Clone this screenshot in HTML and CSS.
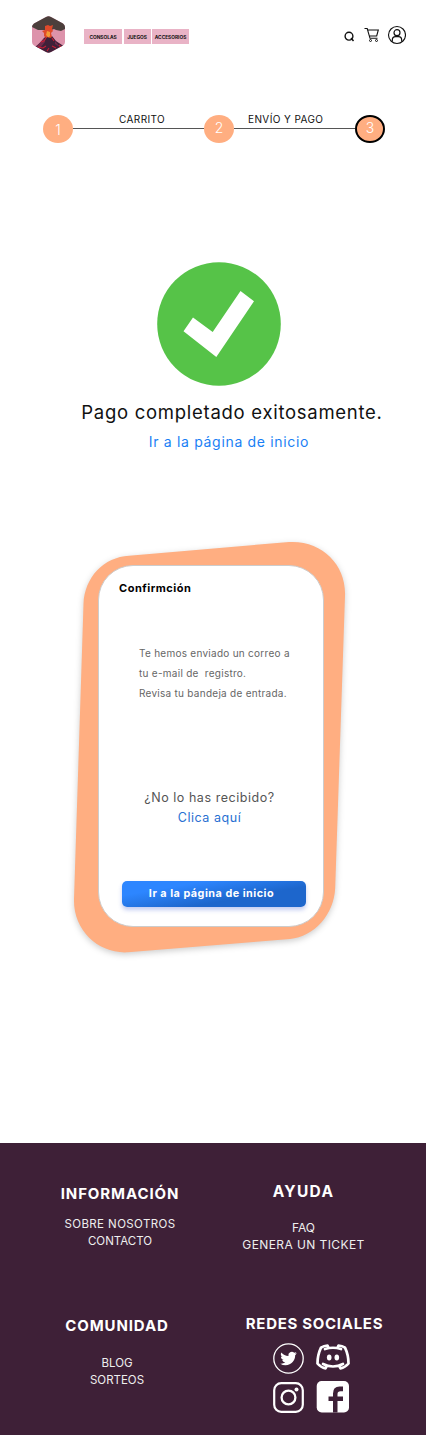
FILE: index.html
```html
<!DOCTYPE html>
<html lang="es">
<head>
<meta charset="utf-8">
<title>Pago completado</title>
<link rel="stylesheet" href="styles.css">
</head>
<body>
<header class="header">
  <svg class="logo" width="33" height="37" viewBox="0 0 33 37">
    <defs><clipPath id="hex"><path d="M14 1Q16.500 -.5 19 1L31 7.500Q33 9 33 11V26Q33 28 31 29.500L19 36Q16.500 37.500 14 36L2 29.500Q0 28 0 26V11Q0 9 2 7.500Z"/></clipPath></defs>
    <g clip-path="url(#hex)">
      <path fill="#dd93ab" d="M0 0h33v37H0z"/>
      <path fill="#4b3f3c" d="M0 0h33v13l-4 2-5-1-2-1-5 2-5-1-6 0-6-3z"/>
      <path fill="#402039" d="M13 21l7-1 4 5 9 6v6H3v-6l6-5z"/>
      <path fill="#74294b" d="M12 22l1 4-5 6-4-1zM23 25l5 6-5-3z"/>
      <path fill="#df4a2b" d="M13 10l3-1 2 1 3-1-1 4 1 2-2 2 1 4-2 1-2-1-2 1-2-2v-3l-2-2 3-1z"/>
      <path fill="#f39a35" d="M15 15l3 1v4l-1.500 1.500L14 19z"/>
      <path fill="none" stroke="#c91e35" stroke-width="1.100" d="M14 22l-2 3-3 1M20 22l2 3M14 30l-3 2-5-1M20 30l4 2M27 29l2 2M15 35l2-3"/>
    </g>
  </svg>
  <nav class="nav">
    <a class="nav-link nav-consoles">CONSOLAS</a>
    <a class="nav-link nav-games">JUEGOS</a>
    <a class="nav-link nav-accessories">ACCESORIOS</a>
  </nav>
  <svg class="tools" width="66" height="22" viewBox="0 0 66 22" fill="none" stroke="#111">
    <circle cx="9" cy="12.200" r="3.900" stroke-width="1.400"/><path stroke-width="1.500" d="M11 14l2.500 3"/>
    <path stroke-width="1.100" d="M24.500 4.500h2.700l2.800 9.800h7.500M27.800 6h10.500l-1.600 6H29.500"/>
    <circle cx="30.500" cy="16.500" r="1"/><circle cx="36.500" cy="16.500" r="1"/>
    <circle cx="57" cy="11" r="8.500" stroke-width="1.100"/><circle cx="57" cy="8.700" r="3" stroke-width="1.200"/>
    <path stroke-width="1.200" d="M52.300 17.500v-1.200q0-3.600 3.200-3.600h3q3.200 0 3.200 3.600v1.200"/>
  </svg>
</header>

<section class="steps">
  <span class="step step-first">1</span>
  <span class="step-line step-line-cart"><span class="step-label">CARRITO</span></span>
  <span class="step">2</span>
  <span class="step-line"><span class="step-label step-label-pay">ENVÍO Y PAGO</span></span>
  <span class="step step-current">3</span>
</section>

<main>
  <section class="result">
    <svg class="check" width="124" height="124" viewBox="0 0 124 124">
      <circle cx="62" cy="62" r="61.800" fill="#56c348"/>
      <path fill="#fff" d="M26.500 69.300L36 55.600l19.700 14.300L83.500 29 97 39.300 59.300 95z"/>
    </svg>
    <h1 class="title">Pago completado exitosamente.</h1>
    <a class="home-link">Ir a la página de inicio</a>
  </section>

  <section class="confirm">
    <svg class="confirm-shape" width="290" height="430" viewBox="65 532 290 430">
      <path fill="#ffae81" d="M83.500 604C84.500 577 104 557 129 555.700L289 542C322 540 346.500 565 345 596L335.200 888C334 915 314 936.500 290 939L128 952.300C98 954 73 930 74 899Z"/>
    </svg>
    <div class="card">
      <h2 class="card-title">Confirmción</h2>
      <p class="message">Te hemos enviado un correo a<br>tu e-mail de&nbsp; registro.<br>Revisa tu bandeja de entrada.</p>
      <div class="resend">
        <span>¿No lo has recibido?</span>
        <a class="resend-link">Clica aquí</a>
      </div>
      <button class="button">Ir a la página de inicio</button>
    </div>
  </section>
</main>

<footer class="footer">
  <section class="col col-info">
    <h3 class="heading">INFORMACIÓN</h3>
    <a class="wide">SOBRE NOSOTROS</a>
    <a>CONTACTO</a>
  </section>
  <section class="col col-help">
    <h3 class="heading">AYUDA</h3>
    <a>FAQ</a>
    <a class="wide">GENERA UN TICKET</a>
  </section>
  <section class="col col-community">
    <h3 class="heading">COMUNIDAD</h3>
    <a>BLOG</a>
    <a>SORTEOS</a>
  </section>
  <section class="col col-social">
    <h3 class="heading">REDES SOCIALES</h3>
    <div class="socials">
      <svg width="31" height="31" viewBox="0 0 31 31">
        <circle cx="15.500" cy="15.500" r="14.700" fill="none" stroke="#fff" stroke-width="1.300"/>
        <path fill="#fff" transform="translate(7.300 7.200) scale(.69)" d="M23.950 4.570a10 10 0 0 1-2.820.77 4.960 4.960 0 0 0 2.160-2.720c-.95.550-2 .950-3.120 1.180a4.920 4.920 0 0 0-8.380 4.480C7.690 8.090 4.070 6.130 1.640 3.160a4.920 4.920 0 0 0 1.520 6.570 4.900 4.900 0 0 1-2.230-.61v.06a4.920 4.920 0 0 0 3.950 4.830 4.900 4.900 0 0 1-2.210.08 4.940 4.940 0 0 0 4.600 3.420A9.870 9.870 0 0 1 0 19.540a14 14 0 0 0 7.550 2.210c9.050 0 14-7.500 14-13.980 0-.21 0-.42-.02-.63a9.940 9.940 0 0 0 2.420-2.570z"/>
      </svg>
      <svg width="35" height="31" viewBox="0 0 35 31" fill="none" stroke="#fff" stroke-width="2.700" stroke-linejoin="round" stroke-linecap="round">
        <path d="M9 6q8-2.500 16 0M7 21q10 5 20 0M12.500 4.700l-1-2.200Q8 2.700 5 4.700 1.500 12 1.500 20.500q3.500 4.200 8 4.800l1.500-2.800M21.500 4.700l1-2.200q3.500.2 6.500 2.200 3.500 7.300 3.500 15.800-3.500 4.200-8 4.800l-1.500-2.800"/>
        <ellipse cx="13.200" cy="14.500" rx="2.300" ry="2.900" fill="#fff" stroke="none"/><ellipse cx="20.800" cy="14.500" rx="2.300" ry="2.900" fill="#fff" stroke="none"/>
      </svg>
      <svg width="31" height="31" viewBox="0 0 31 31" fill="none" stroke="#fff">
        <rect x="1.200" y="1.200" width="28.600" height="28.600" rx="7" stroke-width="2.200"/>
        <circle cx="15.500" cy="15.500" r="6.900" stroke-width="2.300"/><circle cx="23.500" cy="7.500" r="2" fill="#fff" stroke="none"/>
      </svg>
      <svg class="facebook" width="35" height="32" viewBox="0 0 35 32">
        <rect x=".7" width="32.300" height="31.500" rx="5" fill="#fff"/>
        <path fill="#3e2037" d="M17 31.500V20h-4.500v-4.500H17V12.500Q17 5.500 23.500 5.500H27v4.800h-2.500q-3 0-3 2.600v2.600H27V20h-5.500v11.500z"/>
      </svg>
    </div>
  </section>
</footer>
</body>
</html>
```
FILE: styles.css
```css
* { box-sizing: border-box; }
body { margin: 0; width: 426px; background: #fff; font-family: Inter, "Liberation Sans", sans-serif; color: #111; }
h1, h2, h3, p { margin: 0; }
svg { display: block; }

.header { display: flex; height: 72px; padding: 16px 20px 0 32px; align-items: flex-start; }
.nav { display: flex; gap: 1.5px; margin: 13px 0 0 19px; }
.nav-link { height: 15px; background: #e9b3c6; font-size: 4.800px; line-height: 16px; font-weight: 700; text-align: center; }
.nav-consoles { width: 38px; }
.nav-games { width: 27px; }
.nav-accessories { width: 37px; }
.tools { margin: 8px 0 0 auto; }

.steps { display: flex; align-items: center; margin-top: 43px; padding: 0 41px 0 43px; height: 28px; }
.step { flex: none; width: 30px; height: 28px; border-radius: 50%; background: #ffae81; color: #fff; font-size: 14px; line-height: 26px; font-weight: 300; text-align: center; }
.step-first { line-height: 30px; }
.step-current { border: 2px solid #000; line-height: 22px; }
.step-line { flex: 1; height: 14px; border-bottom: 1px solid #555; display: flex; margin-top: -14px; }
.step-line-cart { flex: 0 0 131px; }
.step-label { margin-left: 46px; font-size: 10px; line-height: 10px; letter-spacing: .4px; white-space: nowrap; margin-top: -1px; }
.step-label-pay { margin-left: 14px; }

.result { padding-top: 119px; display: flex; flex-direction: column; align-items: center; }
.check { margin-left: 11px; }
.title { margin: 14px 0 0 38px; font-size: 18.500px; line-height: 24px; font-weight: 400; letter-spacing: .72px; white-space: nowrap; }
.home-link { margin: 8px 0 0 32px; font-size: 14px; line-height: 20px; letter-spacing: .68px; color: #1a7ff5; }

.confirm { position: relative; margin-top: 113px; padding-left: 98px; }
.confirm-shape { position: absolute; left: 65px; top: -33px; filter: drop-shadow(0 2px 3px rgba(0, 0, 0, .2)); }
.card { position: relative; width: 226px; height: 362px; border: 1px solid #ccc; border-radius: 35px; background: #fff; padding: 12px 16px 0 20px; }
.card-title { font-size: 11px; line-height: 20px; letter-spacing: .5px; color: #000; }
.message { margin: 45px 0 0 20px; font-size: 10px; line-height: 20px; letter-spacing: .27px; color: #666; white-space: nowrap; }
.resend { display: flex; flex-direction: column; align-items: center; margin: 85px 7px 0 0; font-size: 12.500px; line-height: 20px; letter-spacing: .55px; color: #555; }
.resend-link { color: #2870d2; }
.button { display: block; width: 184px; height: 26px; margin: 53px 0 0 3px; padding: 0 5px 0 0; border: 0; border-radius: 5px; background: linear-gradient(170deg, #2d86ff 25%, #1d66cc 65%); box-shadow: 0 3px 4px rgba(60, 90, 210, .3); color: #fff; font: 700 10.800px/26px Inter, "Liberation Sans", sans-serif; letter-spacing: .5px; }

.footer { display: grid; grid-template-columns: 213px 213px; grid-template-rows: 132px 160px; margin-top: 216px; height: 292px; background: #3e2037; color: #fff; }
.col { display: flex; flex-direction: column; align-items: center; font-size: 11.500px; line-height: 16.500px; color: #eee; }
.heading { font-size: 15px; line-height: 20px; letter-spacing: .9px; color: #fff; white-space: nowrap; }
.wide { letter-spacing: .4px; }
.col-info { padding: 41px 0 0 27px; }
.col-info .heading { margin-bottom: 12px; }
.col-help { padding: 39px 32px 0 0; font-size: 12px; }
.col-help .heading { margin-bottom: 18px; font-size: 15.500px; letter-spacing: 1.3px; }
.col-community { padding: 41px 0 0 21px; }
.col-community .heading { margin-bottom: 19px; }
.col-social { padding: 39px 10px 0 0; }
.col-social .heading { letter-spacing: .7px; }
.socials { display: grid; grid-template-columns: 31px 35px; gap: 8px 12px; margin: 9px 6px 0 0; }
.facebook { margin-top: -1px; }
```
